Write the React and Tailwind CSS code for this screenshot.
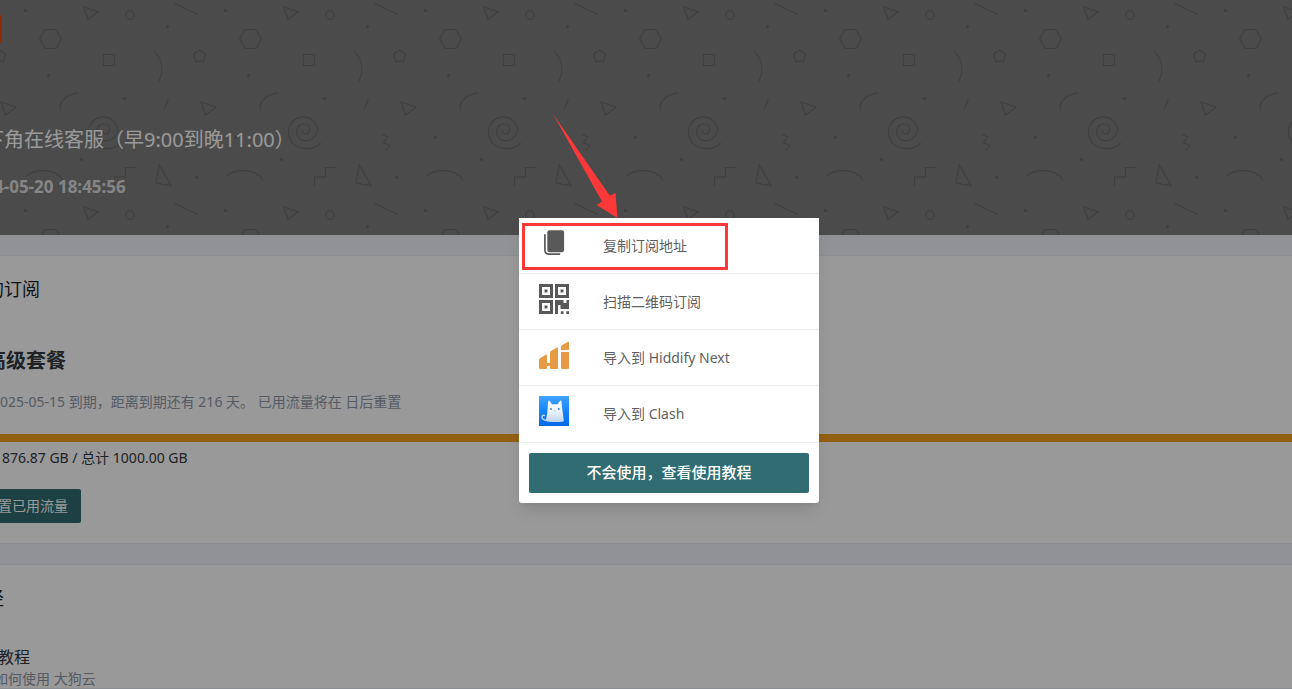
function ConfettiPattern() {
  return (
    <svg className="absolute inset-0 h-full w-full" aria-hidden="true">
      <defs>
        <pattern id="confetti" width="200" height="200" patternUnits="userSpaceOnUse">
          <g fill="none" stroke="#6a6a6a" strokeWidth="1.2">
            <path d="M84 7L98 12L88 19.3Z" />
            <circle cx="130" cy="15" r="4.3" />
            <path d="M174 3L198 14.7" />
            <path d="M39.7 39L45 29.5H56L61.3 39L56 48.5H45Z" />
            <path d="M103.5 54.5H114.5V65.5H103.5Z" />
            <path d="M154.3 51.3C162.5 60 164 71 158.7 81.5" />
            <path d="M199.3 50L205.5 54L203.5 61.3H195.5L193.5 54Z" />
            <path d="M-.7 50L5.5 54L3.5 61.3H-4.5L-6.5 54Z" />
            <path d="M60 111C59 100 68 93.5 78.7 92.8" />
            <path d="M164.5 109L168.5 98.5" />
            <path d="M1.3 102L16.3 107.3L5.3 115Z" />
            <path d="M103 130C102.2 132.5 104 134.7 106 134C108.5 133.2 109.8 131.2 109.7 129.5C109.6 126 107 124 104 124C99.5 124 96.5 127.5 96.5 131.5C96.5 137 100.5 140.7 105 140.7C112 140.7 117.3 136 117.3 130C117.3 122.5 111 116.8 103.5 116.8C95 116.8 88.5 123.5 88.5 132C88.5 142 96.5 148.7 106 148.7C112 148.7 117 147 121 143.3" />
            <path d="M181 134L187.5 137L183.5 142.7L190 145.3L185.5 151" />
            <path d="M25.7 176.5C35 168.5 56 167.5 63 180.5" />
            <path d="M114.5 186V177H125.5V167.5H135.5" />
            <path d="M159.3 164.5L171 185.5L156 183Z" />
          </g>
          <g fill="#6a6a6a">
            <circle cx="25.5" cy="10.5" r="1.6" />
            <circle cx="167.5" cy="26.5" r="1.6" />
            <circle cx="48.5" cy="75.5" r="1.6" />
            <circle cx="124.5" cy="98.5" r="1.6" />
            <circle cx="35.5" cy="137.5" r="1.6" />
            <circle cx="81.5" cy="159.5" r="1.6" />
            <circle cx="196.5" cy="177.5" r="1.6" />
          </g>
        </pattern>
      </defs>
      <rect width="100%" height="100%" fill="url(#confetti)" />
    </svg>
  );
}

function CopyIcon() {
  return (
    <svg viewBox="0 0 30 30" className="h-full w-full" aria-hidden="true">
      <rect x="8.3" y="2.3" width="16.8" height="21.9" rx="2.2" fill="#595959" />
      <path d="M5.9 6.2V21.8Q5.9 26.2 10.3 26.2H21.2" fill="none" stroke="#595959" strokeWidth="1.7" />
    </svg>
  );
}

function QrIcon() {
  return (
    <svg viewBox="0 0 30 30" className="h-full w-full" fill="#595959" aria-hidden="true">
      <path
        fillRule="evenodd"
        d="M0 0H14V14H0ZM3 3V11H11V3ZM16 0H30V14H16ZM19 3V11H27V3ZM0 16H14V30H0ZM3 19V27H11V19Z"
      />
      <path d="M5.5 5.5H8.5V8.5H5.5ZM21.5 5.5H24.5V8.5H21.5ZM5.5 21.5H8.5V24.5H5.5Z" />
      <path d="M16 16H24.5V19H27.5V16H30V25H21.5V21H19V30H16ZM21.8 27.2H24.5V30H21.8ZM27.3 27.2H30V30H27.3Z" />
    </svg>
  );
}

function HiddifyIcon() {
  return (
    <svg viewBox="0 -1 30 30" className="h-full w-full" fill="#e59a43" aria-hidden="true">
      <path d="M0 19Q0 17.8 1 17.2L6.8 13.8Q8 13.2 8 14.5V22H11V12Q11 10.7 12 10.1L17.5 6.8Q19 6 19 7.5V27Q19 28 18 28H12Q11 28 11 27V25H8V27Q8 28 7 28H1Q0 28 0 27Z" />
      <path d="M22 6Q22 4.8 23 4.2L28.6 .9Q30 .2 30 1.5V9H22ZM22 11H30V27Q30 28 29 28H23Q22 28 22 27Z" />
    </svg>
  );
}

function ClashIcon() {
  return (
    <svg viewBox="0 0 30 30" className="h-full w-full" aria-hidden="true">
      <defs>
        <linearGradient id="sky" x1="0" y1="0" x2="0" y2="1">
          <stop offset="0" stopColor="#43a3fc" />
          <stop offset=".5" stopColor="#1385fb" />
          <stop offset="1" stopColor="#0568e5" />
        </linearGradient>
        <linearGradient id="fur" x1="0" y1="0" x2="0" y2="1">
          <stop offset="0" stopColor="#ffffff" />
          <stop offset=".55" stopColor="#e8f0fa" />
          <stop offset="1" stopColor="#bed1ea" />
        </linearGradient>
      </defs>
      <rect width="30" height="30" fill="url(#sky)" />
      <path d="M8 24.5C4.5 24.5 2.8 22.5 3 20.8C3.2 19.4 4.4 18.9 5.4 19.4" fill="none" stroke="#c1d8f3" strokeWidth="1.4" strokeLinecap="round" />
      <path d="M9.8 4.6Q10.7 4.5 12.8 8.2H18.8Q20.8 4.5 21.8 4.6Q22.7 4.8 22.9 10L24.8 24.5Q24.9 25.6 23.5 25.7Q15.5 26.6 8.2 25.4Q6.5 25 7 23.6Q8.6 17.5 8.8 10Q9 4.8 9.8 4.6Z" fill="url(#fur)" />
      <circle cx="12" cy="13" r=".9" fill="#2f7ccc" />
      <circle cx="19.8" cy="13" r=".9" fill="#2f7ccc" />
      <path d="M14.9 14.7Q15.9 15.7 16.9 14.7" fill="none" stroke="#91b6dc" strokeWidth=".6" />
    </svg>
  );
}

const actions = [
  { label: "复制订阅地址", Icon: CopyIcon },
  { label: "扫描二维码订阅", Icon: QrIcon },
  { label: "导入到 Hiddify Next", Icon: HiddifyIcon },
  { label: "导入到 Clash", Icon: ClashIcon },
];

function SubscribeDialog() {
  return (
    <div role="dialog" aria-modal="true" aria-label="订阅" className="relative w-[300px] rounded-b-[3px] bg-white shadow-lg">
      <ul>
        {actions.map(({ label, Icon }) => (
          <li key={label} className="border-b border-[#ebebf0] last:pb-px">
            <button type="button" className="flex h-[55px] w-full items-center px-5 text-left text-sm text-[#5f5f5f]">
              <span className="mr-[34px] mb-1.5 block size-[30px] shrink-0">
                <Icon />
              </span>
              {label}
            </button>
          </li>
        ))}
      </ul>
      <div className="p-2.5">
        <button type="button" className="h-10 w-full rounded-[2px] bg-[#316c72] text-[15px] font-medium text-white">
          不会使用，查看使用教程
        </button>
      </div>
      <div className="pointer-events-none absolute top-[5px] left-[3px] h-[47px] w-[206px] border-[3px] border-[#fc3838]" />
      <svg viewBox="0 0 68 106" className="pointer-events-none absolute -top-[105px] left-[33px] h-[106px] w-[68px]" aria-hidden="true">
        <path d="M1 1L57.7 82.5L63.5 80L65.5 105L44.5 92L50 88.5Z" fill="#fc3838" />
      </svg>
    </div>
  );
}

export default function App() {
  return (
    <div className="relative h-screen overflow-hidden bg-[#f2f4fb] font-['Noto_Sans','Noto_Sans_CJK_SC',sans-serif] text-sm whitespace-nowrap text-[#343a40]">
      <header className="relative h-[235px] overflow-hidden bg-[#7e7e7e] pt-[15px] text-white">
        <ConfettiPattern />
        <div className="relative">
          <div className="h-7 w-0.5 rounded-r-xs bg-[#e84a17]" />
          <h1 className="mt-[82px] -ml-4 text-xl leading-[30px]">下角在线客服（早9:00到晚11:00）</h1>
          <p className="mt-5 -ml-1.5 text-[17px] leading-6 font-bold text-white/75">4-05-20 18:45:56</p>
        </div>
      </header>

      <main>
        <section className="mt-5 h-[289px] overflow-hidden border-y border-[#e6ebf4] bg-white">
          <h2 className="-ml-3.5 pt-[19px] text-lg leading-7 text-[#212529]">的订阅</h2>
          <h3 className="mt-[46px] -ml-3.5 text-xl leading-6 font-bold">高级套餐</h3>
          <p className="mt-[17px] -ml-2 leading-6 text-[#8f98a6]">2025-05-15 到期，距离到期还有 216 天。 已用流量将在 日后重置</p>
          <div role="progressbar" aria-label="已用流量" aria-valuenow={88} className="mt-5 h-2 bg-[#f5a01f]" />
          <p className="mt-1 ml-0.5 leading-6">876.87 GB / 总计 1000.00 GB</p>
          <button type="button" className="mt-[19px] -ml-[15px] flex h-[34px] items-center rounded-[2px] bg-[#316c72] px-[13px] text-white">
            置已用流量
          </button>
        </section>

        <section className="mt-5 border-y border-[#e6ebf4] bg-white">
          <h2 className="-ml-3.5 pt-[19px] text-lg leading-7 text-[#212529]">径</h2>
          <div className="mt-[33px] h-11 overflow-hidden border-b border-[#e6ebf4]">
            <p className="-ml-0.5 text-base leading-6">教程</p>
            <p className="-ml-1.5 leading-5 text-[#8f98a6]">如何使用 大狗云</p>
          </div>
        </section>
      </main>

      <div className="absolute inset-0 flex items-center justify-center bg-black/40 pt-8 pl-[46px]">
        <SubscribeDialog />
      </div>
    </div>
  );
}
